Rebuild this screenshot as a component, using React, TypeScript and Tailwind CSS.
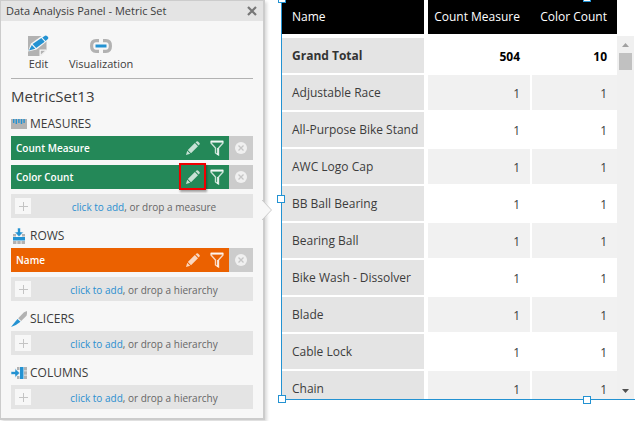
import type { ReactNode } from "react";

const tableRows: [string, number, number][] = [
  ["Adjustable Race", 1, 1],
  ["All-Purpose Bike Stand", 1, 1],
  ["AWC Logo Cap", 1, 1],
  ["BB Ball Bearing", 1, 1],
  ["Bearing Ball", 1, 1],
  ["Bike Wash - Dissolver", 1, 1],
  ["Blade", 1, 1],
  ["Cable Lock", 1, 1],
  ["Chain", 1, 1],
];

function PencilIcon() {
  return (
    <svg width="14" height="14" viewBox="0 0 14 14" fill="currentColor" aria-hidden="true">
      <path d="M0 14 1.2 9.8 4.2 12.8z" />
      <path d="M1.8 9 8.8 2 12 5.2 5 12.2z" />
      <path d="M9.5 1.3 10.6.4Q11.3-.1 12 .5L13.5 2Q14 2.7 13.5 3.4L12.7 4.5z" />
    </svg>
  );
}

function FunnelIcon() {
  return (
    <svg width="14" height="16" viewBox="0 0 14 16" fill="none" stroke="currentColor" aria-hidden="true">
      <path d="M1 1.5H13V3L8.5 8V15L5.5 13V8L1 3z" strokeWidth="1.4" />
      <path d="M1 1.6H13" strokeWidth="2" />
      <path d="M7.8 8V15" strokeWidth="1.6" />
    </svg>
  );
}

function RemoveIcon() {
  return (
    <svg width="12" height="12" viewBox="0 0 12 12" aria-hidden="true">
      <circle cx="6" cy="6" r="6" fill="#f0f0f0" />
      <path d="M3.5 3.5 8.5 8.5M8.5 3.5 3.5 8.5" stroke="#c6c6c6" strokeWidth="1.3" />
    </svg>
  );
}

function EditIcon() {
  return (
    <svg width="21" height="21" viewBox="0 0 21 21" aria-hidden="true">
      <path d="M0 1H18.5V15L12.5 21H0z" fill="#b2b2b2" />
      <path d="M11.5 21V14.5H18.5V15L12.5 21z" fill="#f7f7f7" />
      <path d="M12.8 19.5V15.7H17z" fill="#b2b2b2" />
      <path d="M0 16.5 3 8.5 15 0H21V4.5L8.5 14.5z" fill="#f7f7f7" />
      <path d="M1 15.6 3.8 10 7.3 13.7z" fill="#2392d2" />
      <path d="M4.6 9.1 13.4 3 16.7 6.7 8.2 13z" fill="#2392d2" />
      <path d="M14.3 2.4 17 .7Q18 .1 19 1L20 2.1Q20.8 3.2 19.9 4L17.6 6z" fill="#2392d2" />
    </svg>
  );
}

function LinkIcon() {
  return (
    <svg width="22" height="14" viewBox="0 0 22 14" fill="none" aria-hidden="true">
      <path d="M9 1.7H6Q1.6 1.7 1.6 7T6 12.3H9M13 1.7H16Q20.4 1.7 20.4 7T16 12.3H13" stroke="#b2b2b2" strokeWidth="3.2" />
      <path d="M5.5 7H16.5" stroke="#2392d2" strokeWidth="3" />
    </svg>
  );
}

function RulerIcon() {
  return (
    <svg width="16" height="16" viewBox="0 0 16 16" aria-hidden="true">
      <path d="M0 3H16V13H0z" fill="#b2b2b2" />
      <path d="M2 3H3.4V7H2zM4.6 3H6V8H4.6zM7.2 3H8.6V7H7.2zM9.8 3H11.2V8H9.8zM12.4 3H13.8V7H12.4z" fill="#2392d2" />
    </svg>
  );
}

function RowsIcon() {
  return (
    <svg width="16" height="16" viewBox="0 0 16 16" aria-hidden="true">
      <path d="M2 6H5V8.5H2zM11 6H14V8.5H11zM2 13H5.5V16H2zM6.3 13H9.7V16H6.3zM10.5 13H14V16H10.5z" fill="#b2b2b2" />
      <path d="M2 9H14V12.5H2z" fill="#2392d2" />
      <path d="M6.5 0H9.5V4H12.5L8 8.8 3.5 4H6.5z" fill="#2392d2" stroke="#f7f7f7" strokeWidth=".6" />
    </svg>
  );
}

function SlicerIcon() {
  return (
    <svg width="16" height="16" viewBox="0 0 16 16" aria-hidden="true">
      <path d="M0 16Q3.5 11.5 6.5 8L9.5 10.7Q6 13.8 0 16z" fill="#2392d2" />
      <path d="M7.2 7.2 13 1.2 16 0V2.8L15.5 4.7 10.2 9.9z" fill="#b2b2b2" />
    </svg>
  );
}

function ColumnsIcon() {
  return (
    <svg width="16" height="16" viewBox="0 0 16 16" aria-hidden="true">
      <path d="M6 2H8.5V5H6zM6 11H8.5V14H6zM13 2H16V5.5H13zM13 6.3H16V9.7H13zM13 10.5H16V14H13z" fill="#b2b2b2" />
      <path d="M9 2H12.5V14H9z" fill="#2392d2" />
      <path d="M0 6.5H4V3.5L8.8 8 4 12.5V9.5H0z" fill="#2392d2" stroke="#f7f7f7" strokeWidth=".6" />
    </svg>
  );
}

function Section({ title, icon, children }: { title: string; icon: ReactNode; children: ReactNode }) {
  return (
    <section>
      <h3 className="flex h-[30px] items-center gap-[3px] pt-1.5 text-xs text-[#3c3c3c]">
        {icon}
        {title}
      </h3>
      <div className="flex flex-col gap-[5px]">{children}</div>
    </section>
  );
}

function Field({ label, orange, marked }: { label: string; orange?: boolean; marked?: boolean }) {
  return (
    <div className={`flex h-6 items-center text-white ${orange ? "bg-[#eb6100]" : "bg-[#248858]"}`}>
      <span className="flex-1 pl-[5px] text-[10px] font-semibold">{label}</span>
      <button aria-label={`Edit ${label}`} className="relative flex h-6 w-6 items-center justify-center text-white/75">
        <PencilIcon />
        {marked && (
          <span className="absolute -top-0.5 -left-0.5 h-[27px] w-[27px] border-2 border-[#f00000] shadow-[1px_2px_2px_rgba(0,0,0,0.35)]" />
        )}
      </button>
      <button aria-label={`Filter ${label}`} className="flex h-6 w-6 items-center justify-center text-white/75">
        <FunnelIcon />
      </button>
      <button aria-label={`Remove ${label}`} className="flex h-6 w-6 items-center justify-center bg-[#cccccc]">
        <RemoveIcon />
      </button>
    </div>
  );
}

function AddRow({ kind }: { kind: string }) {
  return (
    <div className="flex h-6 items-center bg-[#e4e4e4] pl-1">
      <button aria-label={`Add ${kind}`} className="flex h-4 w-4 items-center justify-center bg-[#f7f7f7]">
        <svg width="9" height="9" viewBox="0 0 9 9" stroke="#c4c4c4" aria-hidden="true">
          <path d="M4.5 0V9M0 4.5H9" />
        </svg>
      </button>
      <p className="flex-1 pt-0.5 pl-1 text-center text-[10px] text-[#666666]">
        <a href="#add" className="text-[#2b8fd0]">click to add</a>, or drop a {kind}
      </p>
    </div>
  );
}

function Panel() {
  return (
    <aside className="relative w-[265px] shrink-0 self-start border border-r-2 border-b-2 border-[#cccccc] bg-[#f7f7f7] pb-[9px] shadow-[2px_2px_3px_rgba(0,0,0,0.15)]">
      <header className="flex h-5 items-center justify-between bg-[#e4e4e4] pr-[5px] pl-[5px]">
        <h1 className="text-[11px] leading-4 text-[#3c3c3c]">Data Analysis Panel - Metric Set</h1>
        <button aria-label="Close" className="flex h-3 w-3 items-center justify-center">
          <svg width="10" height="10" viewBox="0 0 10 10" stroke="#777777" strokeWidth="2.2" aria-hidden="true">
            <path d="M1 1 9 9M9 1 1 9" />
          </svg>
        </button>
      </header>
      <div className="px-2.5">
        <div className="flex h-[58px] items-start gap-5 border-b border-[#b2b2b2] pt-3.5 pl-[17px] text-[11px] leading-4 text-[#3c3c3c]">
          <button className="flex flex-col items-center">
            <span className="flex h-[21px] items-center"><EditIcon /></span>
            Edit
          </button>
          <button className="flex flex-col items-center">
            <span className="flex h-[21px] items-center"><LinkIcon /></span>
            Visualization
          </button>
        </div>
        <h2 className="h-[27px] pt-[7px] text-[15px] leading-5 text-[#3c3c3c]">MetricSet13</h2>
        <Section title="MEASURES" icon={<RulerIcon />}>
          <Field label="Count Measure" />
          <Field label="Color Count" marked />
          <AddRow kind="measure" />
        </Section>
        <Section title="ROWS" icon={<RowsIcon />}>
          <Field label="Name" orange />
          <AddRow kind="hierarchy" />
        </Section>
        <Section title="SLICERS" icon={<SlicerIcon />}>
          <AddRow kind="hierarchy" />
        </Section>
        <Section title="COLUMNS" icon={<ColumnsIcon />}>
          <AddRow kind="hierarchy" />
        </Section>
      </div>
      <svg width="11" height="20" viewBox="0 0 11 20" className="absolute top-[199px] -right-2.5" aria-hidden="true">
        <path d="M0 0 9.5 10 0 20z" fill="#f7f7f7" />
        <path d="M0 0 9.5 10 0 20" fill="none" stroke="#cccccc" />
      </svg>
    </aside>
  );
}

function Handle({ place }: { place: string }) {
  return <span className={`absolute h-2 w-2 border border-[#2392d2] bg-white ${place}`} />;
}

function DataTable() {
  return (
    <main className="relative ml-4 h-[calc(100vh-21px)] min-w-0 flex-1 border-b border-l border-[#2392d2]">
      <div className="flex h-full overflow-hidden pr-px">
        <table className="w-full flex-1 table-fixed border-separate border-spacing-0 self-start text-xs">
          <colgroup>
            <col />
            <col className="w-[104px]" />
            <col className="w-[85px]" />
          </colgroup>
          <thead>
            <tr className="h-[38px] text-white">
              <th className="border-r-4 border-b-4 border-white bg-black pl-2.5 text-left font-normal">Name</th>
              <th className="border-b-4 border-white bg-black pr-3 text-right font-normal whitespace-nowrap">Count Measure</th>
              <th className="border-b-4 border-white bg-black pr-2.5 text-right font-normal whitespace-nowrap">Color Count</th>
            </tr>
          </thead>
          <tbody>
            <tr className="h-[37px] font-bold text-black">
              <th className="border-r-4 border-b-2 border-white bg-[#e4e4e4] pl-2.5 text-left text-[#333333]">Grand Total</th>
              <td className="pr-3 text-right">504</td>
              <td className="pr-2.5 text-right">10</td>
            </tr>
            {tableRows.map(([name, count, colors]) => (
              <tr key={name} className="group h-[37px] text-[#3c3c3c]">
                <th className="border-r-4 border-b-2 border-white bg-[#e4e4e4] pl-2.5 text-left font-normal whitespace-nowrap">{name}</th>
                <td className="border-r-2 border-b-2 border-white pt-0.5 pr-2.5 text-right group-even:bg-[#f1f1f1]">{count}</td>
                <td className="border-b-2 border-white pt-0.5 pr-2.5 text-right group-even:bg-[#f1f1f1]">{colors}</td>
              </tr>
            ))}
          </tbody>
        </table>
        <div className="mt-9 flex w-[17px] shrink-0 flex-col items-center bg-[#f0f0f0]">
          <button aria-label="Scroll up" className="flex h-[17px] w-[17px] items-center justify-center">
            <svg width="7" height="4" viewBox="0 0 7 4" fill="#a0a0a0" aria-hidden="true"><path d="M0 4 3.5 0 7 4z" /></svg>
          </button>
          <div className="h-[17px] w-[13px] bg-[#c1c1c1]" />
          <button aria-label="Scroll down" className="mt-auto flex h-[17px] w-[17px] items-center justify-center">
            <svg width="7" height="4" viewBox="0 0 7 4" fill="#505050" aria-hidden="true"><path d="M0 0H7L3.5 4z" /></svg>
          </button>
        </div>
      </div>
      <Handle place="-top-[5px] -left-[4px]" />
      <Handle place="top-[195px] -left-[5px]" />
      <Handle place="-bottom-[4px] -left-[4px]" />
      <Handle place="-top-[6px] left-[301px]" />
      <Handle place="-bottom-[5px] left-[301px]" />
    </main>
  );
}

export default function App() {
  return (
    <div className="flex h-screen overflow-hidden bg-white font-['Open_Sans','Noto_Sans',sans-serif]">
      <Panel />
      <DataTable />
    </div>
  );
}
